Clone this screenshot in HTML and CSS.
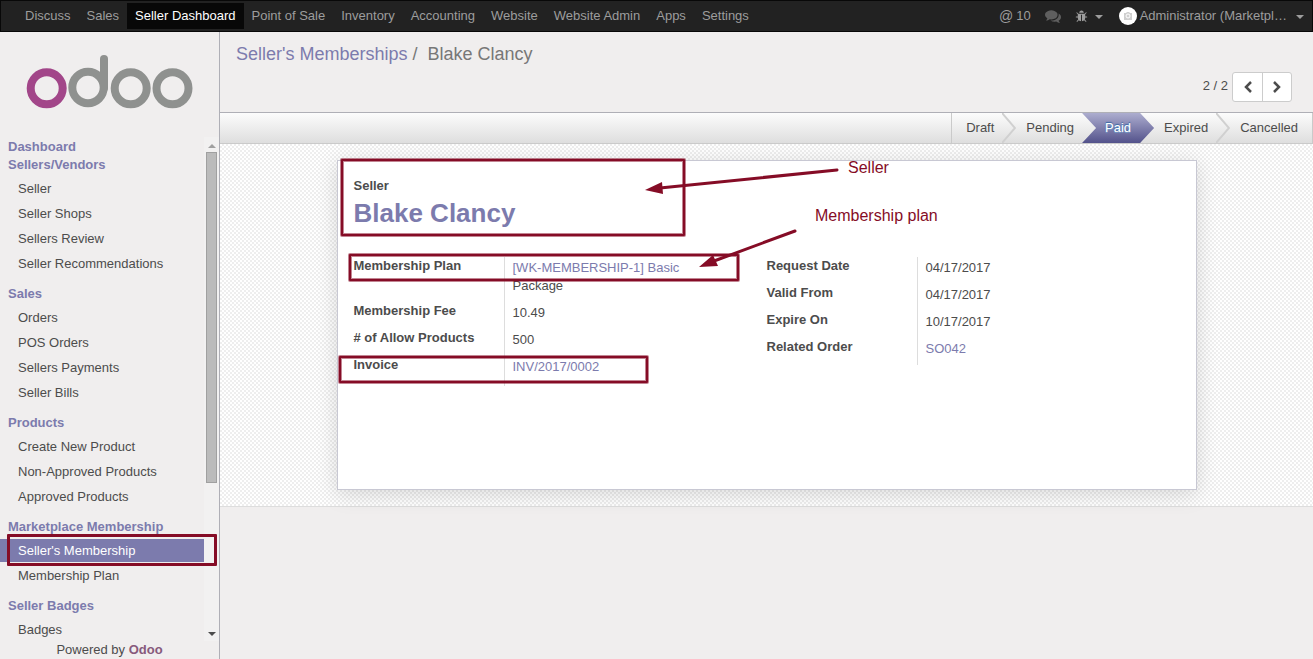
FILE: index.html
```html
<!DOCTYPE html>
<html lang="en">
<head>
<meta charset="utf-8">
<title>Blake Clancy - Odoo</title>
<link rel="stylesheet" href="styles.css">
</head>
<body>
<header class="topbar">
  <nav class="topnav">
    <a href="#">Discuss</a>
    <a href="#">Sales</a>
    <a href="#" class="active">Seller Dashboard</a>
    <a href="#">Point of Sale</a>
    <a href="#">Inventory</a>
    <a href="#">Accounting</a>
    <a href="#">Website</a>
    <a href="#">Website Admin</a>
    <a href="#">Apps</a>
    <a href="#">Settings</a>
  </nav>
  <div class="systray">
    <button type="button"><span class="at">@</span> 10</button>
    <button type="button" class="dim" aria-label="Conversations">
      <svg width="16" height="16" viewBox="0 0 1792 1792"><path fill="currentColor" d="M1408 768q0 139-94 257t-256.500 186.500-353.500 68.500q-86 0-176-16-124 88-278 128-36 9-86 16h-3q-11 0-20.500-8t-11.500-21q-1-3-1-6.500t.5-6.500 2-6l2.500-5 3.500-5.500 4-5 4.500-5 4-4.500q5-6 23-25t26-29.500 22.500-29 25-38.500 20.500-44q-124-72-195-177t-71-224q0-139 94-257t256.500-186.500 353.500-68.500 353.500 68.500 256.500 186.500 94 257zm384 256q0 120-71 224.500t-195 176.500q10 24 20.500 44t25 38.500 22.500 29 26 29.500 23 25q1 1 4 4.500t4.500 5 4 5 3.500 5.500l2.500 5 2 6 .5 6.500-1 6.500q-3 14-13 22t-22 7q-50-7-86-16-154-40-278-128-90 16-176 16-271 0-472-132 58 4 88 4 161 0 309-45t264-129q125-92 192-212t67-254q0-77-23-152 129 71 204 178t75 230z"/></svg>
    </button>
    <button type="button" aria-label="Debug">
      <svg width="13" height="13" viewBox="0 0 1792 1792"><path fill="currentColor" d="M1696 960q0 26-19 45t-45 19h-224q0 171-67 290l208 209q19 19 19 45t-19 45q-18 19-45 19t-45-19l-198-197q-5 5-15 13t-42 28.500-65 36.500-82 29-97 13v-896h-128v896q-51 0-101.500-13.500t-87-33-66-39-43.500-32.500l-15-14-183 207q-20 21-48 21-24 0-43-16-19-18-20.500-44.500t15.500-46.500l202-227q-58-114-58-274h-224q-26 0-45-19t-19-45 19-45 45-19h224v-294l-173-173q-19-19-19-45t19-45 45-19 45 19l173 173h844l173-173q19-19 45-19t45 19 19 45-19 45l-173 173v294h224q26 0 45 19t19 45zm-480-576h-640q0-133 93.500-226.500t226.500-93.500 226.500 93.500 93.500 226.500z"/></svg>
      <span class="caret"></span>
    </button>
    <button type="button" class="user">
      <svg width="18" height="18" viewBox="0 0 18 18"><circle cx="9" cy="9" r="9" fill="#fff"/><path fill="#cfcfcf" d="M5 6h2l1-1h2l1 1h2v7H5z"/><circle cx="9" cy="9" r="2" fill="none" stroke="#fff"/></svg>
      <span class="user-name">Administrator (Marketpl…</span>
      <span class="caret"></span>
    </button>
  </div>
</header>
<div class="webclient">
  <aside class="sidebar">
    <a href="#" class="logo" aria-label="Odoo">
      <svg width="168" height="54" viewBox="26 55 168 54" fill="none" stroke-width="8">
        <circle cx="46.700" cy="88.300" r="16" stroke="#a24689"/>
        <g stroke="#8f918f">
          <circle cx="88" cy="87.500" r="15.700"/>
          <path d="M104 59v29" stroke-linecap="round"/>
          <path d="M104 75v13"/>
          <circle cx="130.700" cy="88.300" r="16"/>
          <circle cx="172.500" cy="88.300" r="16"/>
        </g>
      </svg>
    </a>
    <div class="menu">
      <nav class="menu-list">
        <h2>Dashboard</h2>
        <h2>Sellers/Vendors</h2>
        <ul>
          <li><a href="#">Seller</a></li>
          <li><a href="#">Seller Shops</a></li>
          <li><a href="#">Sellers Review</a></li>
          <li><a href="#">Seller Recommendations</a></li>
        </ul>
        <h2>Sales</h2>
        <ul>
          <li><a href="#">Orders</a></li>
          <li><a href="#">POS Orders</a></li>
          <li><a href="#">Sellers Payments</a></li>
          <li><a href="#">Seller Bills</a></li>
        </ul>
        <h2>Products</h2>
        <ul>
          <li><a href="#">Create New Product</a></li>
          <li><a href="#">Non-Approved Products</a></li>
          <li><a href="#">Approved Products</a></li>
        </ul>
        <h2>Marketplace Membership</h2>
        <ul>
          <li class="current"><a href="#">Seller's Membership</a></li>
          <li><a href="#">Membership Plan</a></li>
        </ul>
        <h2>Seller Badges</h2>
        <ul>
          <li><a href="#">Badges</a></li>
        </ul>
      </nav>
      <div class="scrollbar" aria-hidden="true">
        <span class="arrow-up"></span>
        <div class="track"><div class="thumb"></div></div>
        <span class="arrow-down"></span>
      </div>
    </div>
    <footer class="powered">Powered by <a href="#">Odoo</a></footer>
  </aside>
  <main class="main">
    <div class="control-panel">
      <nav class="breadcrumb"><a href="#">Seller's Memberships</a><span class="slash">/</span><span>Blake Clancy</span></nav>
      <div class="pager">
        <span class="count">2 / 2</span>
        <div class="pager-buttons">
          <button type="button" aria-label="Previous"><svg width="10" height="12" viewBox="0 0 10 12"><path d="M8 1 3 6l5 5" fill="none" stroke="#4c4c4c" stroke-width="2.500"/></svg></button>
          <button type="button" aria-label="Next"><svg width="10" height="12" viewBox="0 0 10 12"><path d="m2 1 5 5-5 5" fill="none" stroke="#4c4c4c" stroke-width="2.500"/></svg></button>
        </div>
      </div>
    </div>
    <div class="statusbar">
      <button type="button">Draft</button>
      <svg class="chevron" viewBox="0 0 14 30"><path d="M0 0 13 15 0 30"/></svg>
      <button type="button">Pending</button>
      <button type="button" class="active">Paid</button>
      <button type="button">Expired</button>
      <svg class="chevron" viewBox="0 0 14 30"><path d="M0 0 13 15 0 30"/></svg>
      <button type="button">Cancelled</button>
    </div>
    <div class="sheet-bg">
      <section class="sheet">
        <div class="title-label">Seller</div>
        <h1><a href="#">Blake Clancy</a></h1>
        <div class="groups">
          <dl class="fields">
            <dt>Membership Plan</dt><dd><a href="#">[WK-MEMBERSHIP-1] Basic</a><br>Package</dd>
            <dt>Membership Fee</dt><dd>10.49</dd>
            <dt># of Allow Products</dt><dd>500</dd>
            <dt>Invoice</dt><dd class="last"><a href="#">INV/2017/0002</a></dd>
          </dl>
          <dl class="fields">
            <dt>Request Date</dt><dd>04/17/2017</dd>
            <dt>Valid From</dt><dd>04/17/2017</dd>
            <dt>Expire On</dt><dd>10/17/2017</dd>
            <dt>Related Order</dt><dd><a href="#">SO042</a></dd>
          </dl>
        </div>
        <svg class="notes" width="858" height="328" viewBox="338 161 858 328">
          <g class="halo">
            <rect x="342" y="160" width="342" height="75"/>
            <rect x="350" y="255" width="388" height="25"/>
            <rect x="340" y="357" width="307" height="25"/>
          </g>
          <g class="line">
            <rect x="342" y="160" width="342" height="75"/>
            <rect x="350" y="255" width="388" height="25"/>
            <rect x="340" y="357" width="307" height="25"/>
          </g>
          <g class="arrow">
            <path d="M837 170 660 188M795 231 714 261"/>
            <path class="head" d="M645 190l17-8 1 12zM699 267l14-12 5 11z"/>
          </g>
          <text x="848" y="173">Seller</text>
          <text x="815" y="221">Membership plan</text>
        </svg>
      </section>
    </div>
  </main>
</div>
</body>
</html>
```
FILE: styles.css
```css
* { box-sizing: border-box; }
body {
  margin: 0;
  min-height: 100vh;
  display: flex;
  flex-direction: column;
  background: #f0eeee;
  color: #4c4c4c;
  font: 13px/18px "Liberation Sans", Arial, sans-serif;
}
a { color: #7c7bad; text-decoration: none; }
button { font: inherit; color: inherit; background: none; border: 0; padding: 0; }
ul { list-style: none; margin: 0; padding: 0; }

.topbar {
  display: flex;
  justify-content: space-between;
  align-items: center;
  height: 32px;
  padding: 0 8px 0 16px;
  background: #222;
  border: 1px solid #080808;
}
.topnav { display: flex; }
.topnav a { padding: 4px 8px; color: #9d9d9d; white-space: nowrap; }
.topnav .active { background: #080808; color: #fff; }
.systray { display: flex; align-items: center; gap: 14px; color: #9d9d9d; }
.systray button { display: flex; align-items: center; gap: 3px; }
.systray .user { margin-left: 2px; }
.systray .dim { color: #5f5f5f; }
.systray .at { font-size: 14px; }
.systray .user-name { margin-right: 2px; }
.caret {
  margin: 2px 0 0 4px;
  border: 4px solid transparent;
  border-top-color: #9d9d9d;
  border-bottom: 0;
}

.webclient { display: flex; flex: 1; }
.sidebar {
  display: flex;
  flex-direction: column;
  flex: 0 0 220px;
  border-right: 1px solid #afafb6;
}
.logo { display: flex; justify-content: center; padding: 23px 0 28px; }
.menu { display: flex; flex: 1; }
.menu-list { flex: 1; padding-top: 1px; }
.menu h2 { margin: 0; padding-left: 8px; color: #7c7bad; font-size: 13px; line-height: 18px; }
.menu ul { padding-top: 3px; }
.menu li { position: relative; margin-bottom: 2px; }
.menu li:last-child { margin-bottom: 0; }
.menu ul + h2 { margin-top: 10px; }
.menu li a { display: block; padding: 3px 0 2px 18px; color: #4c4c4c; }
.menu .current a { background: #7c7bad; color: #fff; }
.menu .current::after {
  content: "";
  position: absolute;
  z-index: 1;
  inset: -5px -13px -4px 7px;
  border: 3px solid #850c26;
  border-radius: 1px;
}
.scrollbar {
  display: flex;
  flex-direction: column;
  align-items: center;
  width: 15px;
  padding: 7px 0 5px;
  background: #f2f1f1;
}
.arrow-up { border: 4px solid transparent; border-top: 0; border-bottom-color: #a0a0a0; }
.arrow-down { border: 4px solid transparent; border-bottom: 0; border-top-color: #4c4c4c; }
.track { flex: 1; padding-top: 4px; }
.thumb { width: 11px; height: 69%; background: #bbb; border: 1px solid #a0a0a0; }
.powered { text-align: center; }
.powered a { color: #875a7b; font-weight: bold; }

.main { flex: 1; min-width: 0; }
.control-panel {
  display: flex;
  flex-direction: column;
  gap: 8px;
  padding: 12px 21px 10px 16px;
  border-bottom: 1px solid #afafb6;
}
.breadcrumb { font-size: 18px; line-height: 20px; color: #777; }
.slash { padding: 0 10px 0 5px; }
.pager { display: flex; justify-content: flex-end; align-items: center; gap: 4px; }
.pager .count { padding-bottom: 2px; }
.pager-buttons { display: flex; background: #fff; border: 1px solid #ccc; border-radius: 3px; }
.pager-buttons button { display: flex; align-items: center; justify-content: center; width: 29px; height: 28px; }
.pager-buttons button + button { border-left: 1px solid #ccc; }

.statusbar {
  display: flex;
  justify-content: flex-end;
  height: 31px;
  background: linear-gradient(#fcfcfc, #dedede);
  border-bottom: 1px solid #cacaca;
  border-right: 1px solid #cacaca;
}
.statusbar button { padding: 0 8px 0 10px; }
.statusbar button:first-child { padding-left: 14px; border-left: 1px solid #cacaca; }
.statusbar button:last-child { padding-right: 14px; }
.statusbar .active {
  padding: 0 23px;
  color: #fff;
  text-shadow: 0 1px 1px #729fcf, 0 -1px 1px #3465a4;
  background: linear-gradient(#adadcf, #53528b);
  clip-path: polygon(0 0, calc(100% - 14px) 0, 100% 50%, calc(100% - 14px) 100%, 0 100%, 14px 50%);
}
.chevron { width: 14px; height: 30px; fill: none; stroke: #d0d0d0; stroke-width: 2; }

.sheet-bg {
  padding: 16px;
  background: repeating-conic-gradient(#eee 0 25%, #fff 0 50%) 0 0 / 4px 4px;
  border-bottom: 1px solid #ddd;
  background-clip: padding-box;
}
.sheet {
  position: relative;
  max-width: 860px;
  min-height: 330px;
  margin: 0 auto;
  padding: 16px;
  background: #fff;
  border: 1px solid #c8c8d3;
  box-shadow: 0 4px 20px rgba(0, 0, 0, .15);
}
.title-label { font-weight: bold; }
.sheet h1 { margin: 0; font-size: 26px; line-height: 36px; }
.groups { display: grid; grid-template-columns: 1fr 1fr; align-items: start; margin-top: 26px; }
.fields { display: grid; grid-template-columns: 150px 1fr; margin: 0; }
.fields dt { font-weight: bold; }
.fields dd { margin: 0; padding: 2px 8px 7px; border-left: 1px solid #ddd; }
.fields .last { padding-bottom: 10px; }

.notes { position: absolute; top: 0; left: 0; overflow: visible; pointer-events: none; }
.notes rect { fill: none; stroke: #850c26; stroke-linejoin: round; }
.halo rect { stroke-width: 4; opacity: .5; }
.line rect { stroke-width: 2; }
.arrow path { fill: none; stroke: #850c26; stroke-width: 3; stroke-linecap: round; }
.arrow .head { fill: #850c26; stroke: none; }
.notes text { fill: #850c26; font-size: 16px; }
```
